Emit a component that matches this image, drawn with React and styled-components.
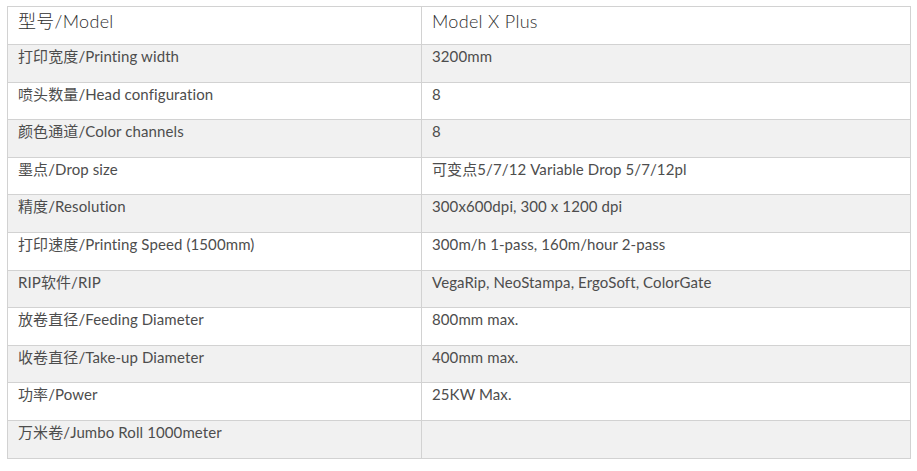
import React from 'react';
import styled, { createGlobalStyle } from 'styled-components';

const GlobalStyle = createGlobalStyle`
	body {
		margin: 0;
		background: #fff;
		font-family: Lato, "Noto Sans CJK SC", sans-serif;
	}
`;

const Wrapper = styled.div`
	padding: 6px 0 0 7px;
`;

const SpecTable = styled.table`
	width: 904px;
	border-collapse: collapse;
	table-layout: fixed;
`;

const Row = styled.tr`
	height: ${(props) => (props.$head ? '38px' : '37.6px')};
	background: ${(props) => (props.$shaded ? '#f1f1f1' : '#fff')};
`;

const Cell = styled.td`
	border: 1px solid #d2d2d2;
	vertical-align: top;
	padding: ${(props) => (props.$head ? '2px 10px 0 10px' : '1px 10px 0 10px')};
	font-size: ${(props) => (props.$head ? '18px' : '15px')};
	line-height: ${(props) => (props.$head ? '24px' : '20px')};
	letter-spacing: ${(props) => (props.$head ? '0.3px' : '0.1px')};
	font-weight: ${(props) => (props.$head ? 300 : 400)};
	color: ${(props) => (props.$head ? '#2e2e2e' : '#4d4d4d')};
	width: ${(props) => props.$width || 'auto'};
`;

const specs = [
	['打印宽度/Printing width', '3200mm'],
	['喷头数量/Head configuration', '8'],
	['颜色通道/Color channels', '8'],
	['墨点/Drop size', '可变点5/7/12 Variable Drop 5/7/12pl'],
	['精度/Resolution', '300x600dpi, 300 x 1200 dpi'],
	['打印速度/Printing Speed (1500mm)', '300m/h 1-pass, 160m/hour 2-pass'],
	['RIP软件/RIP', 'VegaRip, NeoStampa, ErgoSoft, ColorGate'],
	['放卷直径/Feeding Diameter', '800mm max.'],
	['收卷直径/Take-up Diameter', '400mm max.'],
	['功率/Power', '25KW Max.'],
	['万米卷/Jumbo Roll 1000meter', ''],
];

export default function App() {
	return (
		<>
			<GlobalStyle />
			<Wrapper>
				<SpecTable>
					<tbody>
						<Row $head>
							<Cell $head $width='393px'>
								型号/Model
							</Cell>
							<Cell $head>Model X Plus</Cell>
						</Row>
						{specs.map((spec, i) => (
							<Row key={i} $shaded={i % 2 === 0}>
								<Cell>{spec[0]}</Cell>
								<Cell>{spec[1]}</Cell>
							</Row>
						))}
					</tbody>
				</SpecTable>
			</Wrapper>
		</>
	);
}
